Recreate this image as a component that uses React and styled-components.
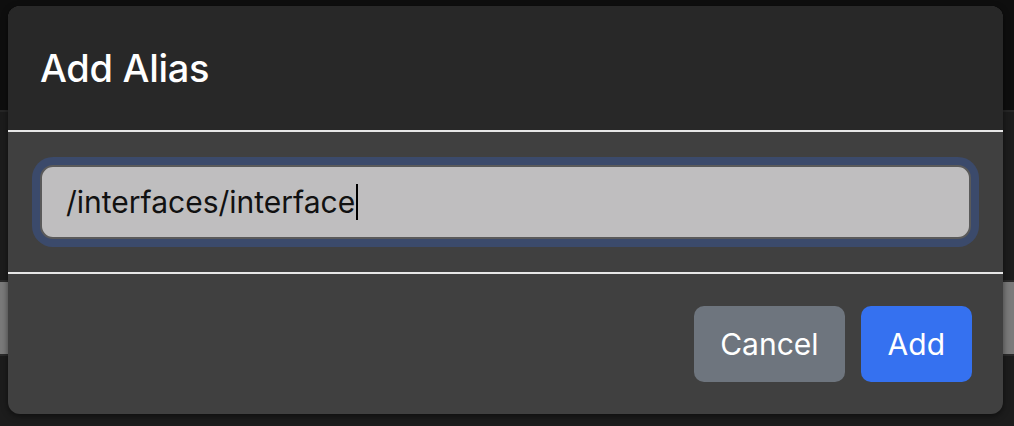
import React from 'react';
import styled, { createGlobalStyle } from 'styled-components';

const GlobalStyle = createGlobalStyle`
  html, body {
    margin: 0;
    padding: 0;
    background: #1c1c1c;
    font-family: Inter, "Liberation Sans", sans-serif;
    overflow: hidden;
  }
`;

const Page = styled.div`
  position: relative;
  width: 1014px;
  height: 426px;
  overflow: hidden;
  background: #1c1c1c;
`;

const TopBar = styled.div`
  height: 112px;
  background: #0e0e0e;
  border-bottom: 2px solid #262626;
  display: flex;
  justify-content: flex-end;
  padding-top: 12px;
  box-sizing: border-box;
`;

const TopText = styled.span`
  font-family: "DejaVu Sans", sans-serif;
  font-size: 26px;
  color: #8c8c8c;
  margin-right: -20px;
`;

const Content = styled.div`
  padding-top: 168px;
`;

const GreyBar = styled.div`
  height: 72px;
  background: #7a7a7a;
  border-top: 2px solid #2a2a2a;
  border-bottom: 2px solid #2a2a2a;
`;

const Modal = styled.div`
  position: absolute;
  top: 6px;
  left: 8px;
  width: 995px;
  height: 408px;
  border-radius: 12px;
  overflow: hidden;
  background: #404040;
  box-shadow: 0 2px 6px rgba(0, 0, 0, 0.5);
  display: flex;
  flex-direction: column;
`;

const Header = styled.div`
  height: 126px;
  background: #282828;
  border-bottom: 2px solid #e7e7e7;
  display: flex;
  align-items: center;
  padding: 0 32px;
  box-sizing: border-box;
`;

const Title = styled.h2`
  margin: 0;
  font-size: 38px;
  font-weight: 500;
  color: #ffffff;
  letter-spacing: -0.3px;
`;

const Body = styled.div`
  height: 142px;
  padding: 0 32px;
  box-sizing: border-box;
  border-bottom: 2px solid #e7e7e7;
  display: flex;
  align-items: center;
`;

const Input = styled.div`
  flex: 1;
  height: 74px;
  box-sizing: border-box;
  border: 2px solid #5a5a5a;
  border-radius: 13px;
  background: #bfbebf;
  box-shadow: 0 0 0 8px #3b4a6b;
  display: flex;
  align-items: center;
  padding-left: 24px;
  font-size: 30px;
  color: #111111;
`;

const Caret = styled.span`
  display: inline-block;
  width: 2px;
  height: 36px;
  background: #000;
  margin-left: 1px;
`;

const Footer = styled.div`
  flex: 1;
  display: flex;
  justify-content: flex-end;
  align-items: center;
  gap: 16px;
  padding: 0 31px;
`;

const Button = styled.button`
  height: 76px;
  padding: 0 ${p => p.$pad}px;
  border: none;
  border-radius: 10px;
  background: ${p => p.$bg};
  color: #fff;
  font-family: Inter, "Liberation Sans", sans-serif;
  font-size: 30px;
  font-weight: 400;
`;

export default function App() {
  return (
    <>
      <GlobalStyle />
      <Page>
        <TopBar>
          <TopText>fi</TopText>
        </TopBar>
        <Content>
          <GreyBar />
        </Content>
        <Modal>
          <Header>
            <Title>Add Alias</Title>
          </Header>
          <Body>
            <Input>
              /interfaces/interface
              <Caret />
            </Input>
          </Body>
          <Footer>
            <Button $bg="#6e757e" $pad={26}>Cancel</Button>
            <Button $bg="#3571f0" $pad={27}>Add</Button>
          </Footer>
        </Modal>
      </Page>
    </>
  );
}
